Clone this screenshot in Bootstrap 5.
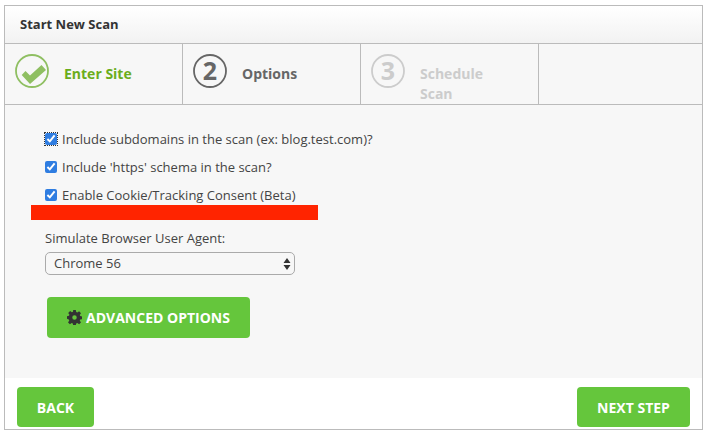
<!DOCTYPE html>
<html lang="en">
  <head>
    <meta charset="UTF-8" />
    <title>Start New Scan</title>
    <link href="https://cdn.jsdelivr.net/npm/bootstrap@5.3.0/dist/css/bootstrap.min.css" rel="stylesheet" />
    <style>
      body { background: #fff; font-family: "Open Sans", sans-serif; color: #333; }
      .scan-box { width: 699px; height: 425px; margin: 5px 0 0 4px; border: 1px solid #bbb; }
      .scan-head { height: 38px; padding-left: 15px; background: linear-gradient(#fff, #f2f2f2); border-bottom: 1px solid #bbb; font-size: 13px; font-weight: 700; color: #333; }
      .scan-steps { height: 61px; background: #f7f7f7; border-bottom: 1px solid #bbb; }
      .scan-step { width: 178px; height: 60px; border-right: 1px solid #bbb; flex: none; }
      .scan-step svg { flex: none; margin: 10px 0 0 10px; }
      .step-label { font-size: 14px; font-weight: 700; line-height: 20px; margin: 20px 0 0 15px; }
      .step-done { color: #6aad1c; }
      .step-now { color: #666; }
      .step-off { color: #ccc; width: 80px; }
      .scan-body { height: 273px; padding: 26px 40px 0; background: #f7f7f7; font-size: 13px; color: #444; }
      .scan-check { height: 18px; margin-bottom: 10px; gap: 5px; }
      .scan-check input { width: 12px; height: 12px; margin: 0 0 2px; accent-color: #2f7de1; }
      .first-check input { outline: 1px dotted #333; }
      .red-bar { height: 15px; width: 287px; margin: 0 0 0 -14px; background: #ff2400; }
      .agent-label { margin-top: 9px; margin-bottom: 5px; line-height: 18px; }
      .agent-select { width: 250px; height: 23px; padding: 0 8px; font-size: 13px; color: #444; border: 1px solid #aaa; border-radius: 5px; appearance: none; background: #f7f7f7 url("data:image/svg+xml,%3Csvg xmlns='http://www.w3.org/2000/svg' width='8' height='12'%3E%3Cpath fill='%23333' d='M4 0l3.5 5h-7zM4 12L.5 7h7z'/%3E%3C/svg%3E") no-repeat right 3px center; }
      .green-btn { background: #65c63c; border: 0; border-radius: 4px; color: #fff; font-size: 14px; font-weight: 700; }
      .green-btn:hover { background: #65c63c; color: #fff; }
      .adv-btn { width: 203px; height: 41px; margin: 22px 0 0 2px; }
      .scan-foot { height: 51px; padding: 9px 12px 0; background: #fff; }
      .back-btn { width: 77px; height: 40px; }
      .next-btn { width: 113px; height: 40px; }
    </style>
  </head>
  <body>
    <div class="scan-box">
      <div class="scan-head d-flex align-items-center">Start New Scan</div>

      <!-- Steps -->
      <div class="scan-steps d-flex">
        <div class="scan-step d-flex">
          <svg width="34" height="34" viewBox="0 0 34 34">
            <circle cx="17" cy="17" r="16" fill="none" stroke="#8fbf62" stroke-width="1.8" />
            <path d="M6.7 21l3.8-4 4.5 4.5L26.5 11l4.5 5L15 30z" fill="#8fbf62" />
          </svg>
          <div class="step-label step-done">Enter Site</div>
        </div>
        <div class="scan-step d-flex">
          <svg width="34" height="34" viewBox="0 0 34 34">
            <circle cx="17" cy="17" r="16" fill="none" stroke="#666" stroke-width="1.8" />
            <text x="17" y="26" text-anchor="middle" font-family="Open Sans" font-weight="700" font-size="25" fill="#666">2</text>
          </svg>
          <div class="step-label step-now">Options</div>
        </div>
        <div class="scan-step d-flex">
          <svg width="34" height="34" viewBox="0 0 34 34">
            <circle cx="17" cy="17" r="16" fill="none" stroke="#ccc" stroke-width="1.8" />
            <text x="17" y="26" text-anchor="middle" font-family="Open Sans" font-weight="700" font-size="25" fill="#ccc">3</text>
          </svg>
          <div class="step-label step-off">Schedule Scan</div>
        </div>
      </div>

      <!-- Options -->
      <div class="scan-body">
        <label class="scan-check first-check d-flex align-items-center">
          <input type="checkbox" checked /> Include subdomains in the scan (ex: blog.test.com)?
        </label>
        <label class="scan-check d-flex align-items-center">
          <input type="checkbox" checked /> Include 'https' schema in the scan?
        </label>
        <label class="scan-check d-flex align-items-center mb-0">
          <input type="checkbox" checked /> Enable Cookie/Tracking Consent (Beta)
        </label>
        <div class="red-bar"></div>
        <div class="agent-label">Simulate Browser User Agent:</div>
        <select class="agent-select d-block">
          <option>Chrome 56</option>
        </select>
        <button class="btn green-btn adv-btn d-flex align-items-center justify-content-center gap-1 p-0">
          <svg width="15" height="15" viewBox="0 0 16 16">
            <path fill="#333" fill-rule="evenodd" d="M6.6 0h2.8l.4 2.2 1.2.5 1.9-1.3 2 2-1.3 1.9.5 1.2 2.2.4v2.8l-2.2.4-.5 1.2 1.3 1.9-2 2-1.9-1.3-1.2.5-.4 2.2H6.6l-.4-2.2-1.2-.5-1.9 1.3-2-2 1.3-1.9-.5-1.2L-.1 9.4V6.6l2.2-.4.5-1.2-1.3-1.9 2-2 1.9 1.3 1.2-.5zM8 5.6a2.4 2.4 0 1 0 0 4.8 2.4 2.4 0 0 0 0-4.8z" />
          </svg>
          ADVANCED OPTIONS
        </button>
      </div>

      <!-- Footer -->
      <div class="scan-foot d-flex justify-content-between">
        <button class="btn green-btn back-btn p-0">BACK</button>
        <button class="btn green-btn next-btn p-0">NEXT STEP</button>
      </div>
    </div>
    <script src="https://cdn.jsdelivr.net/npm/bootstrap@5.3.0/dist/js/bootstrap.bundle.min.js"></script>
  </body>
</html>
